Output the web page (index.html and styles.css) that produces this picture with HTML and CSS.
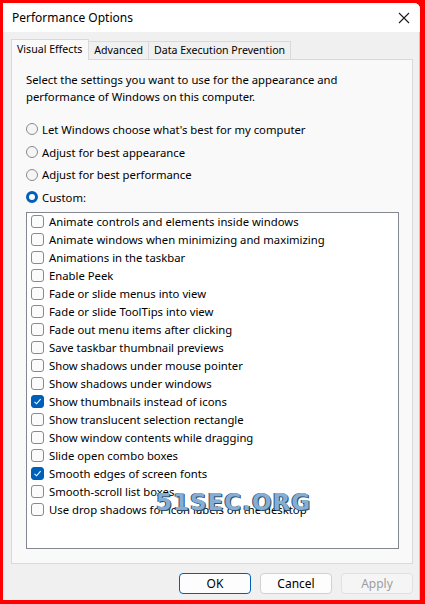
FILE: index.html
```html
<!DOCTYPE html>
<html lang="en">
<head>
    <meta charset="UTF-8">
    <title>Performance Options</title>
    <link rel="stylesheet" href="styles.css">
</head>
<body>

<div class="window">
    <div class="titlebar">
        <span class="title">Performance Options</span>
        <svg class="close" width="12" height="12" viewBox="0 0 12 12">
            <path d="M1 1 L11 11 M11 1 L1 11" stroke="#1a1a1a" stroke-width="1.1" fill="none"/>
        </svg>
    </div>

    <div class="content">
        <div class="tabs">
            <div class="tab active">Visual Effects</div>
            <div class="tab">Advanced</div>
            <div class="tab">Data Execution Prevention</div>
        </div>

        <div class="panel">
            <p class="intro">Select the settings you want to use for the appearance and performance of Windows on this computer.</p>

            <div class="radios">
                <label class="radio"><span class="dot"></span>Let Windows choose what's best for my computer</label>
                <label class="radio"><span class="dot"></span>Adjust for best appearance</label>
                <label class="radio"><span class="dot"></span>Adjust for best performance</label>
                <label class="radio"><span class="dot on"></span>Custom:</label>
            </div>

            <div class="listbox" id="effects">
                <!-- rows are filled in by the script below -->
            </div>
        </div>

        <div class="buttons">
            <button class="btn default">OK</button>
            <button class="btn">Cancel</button>
            <button class="btn" disabled>Apply</button>
        </div>
    </div>

    <div class="watermark">51SEC.ORG</div>
</div>

<script>
    // Visual effect options, as listed in the dialog
    const effects = [
        { name: 'Animate controls and elements inside windows', checked: false },
        { name: 'Animate windows when minimizing and maximizing', checked: false },
        { name: 'Animations in the taskbar', checked: false },
        { name: 'Enable Peek', checked: false },
        { name: 'Fade or slide menus into view', checked: false },
        { name: 'Fade or slide ToolTips into view', checked: false },
        { name: 'Fade out menu items after clicking', checked: false },
        { name: 'Save taskbar thumbnail previews', checked: false },
        { name: 'Show shadows under mouse pointer', checked: false },
        { name: 'Show shadows under windows', checked: false },
        { name: 'Show thumbnails instead of icons', checked: true },
        { name: 'Show translucent selection rectangle', checked: false },
        { name: 'Show window contents while dragging', checked: false },
        { name: 'Slide open combo boxes', checked: false },
        { name: 'Smooth edges of screen fonts', checked: true },
        { name: 'Smooth-scroll list boxes', checked: false },
        { name: 'Use drop shadows for icon labels on the desktop', checked: false }
    ];

    const tick = '<svg width="9" height="9" viewBox="0 0 9 9"><path d="M1.5 4.8 L3.6 6.8 L7.6 2.2" stroke="#fff" stroke-width="1.1" fill="none"/></svg>';

    const list = document.getElementById('effects');
    effects.forEach(item => {
        list.innerHTML += `<div class="row">
                <span class="box ${item.checked ? 'checked' : ''}">${item.checked ? tick : ''}</span>
                <span>${item.name}</span>
            </div>`;
    });
</script>

</body>
</html>
```

FILE: styles.css
```css
html, body {
    margin: 0;
    padding: 0;
}

body {
    background-color: #ff0000;
    font-family: "Noto Sans", "Open Sans", sans-serif;
    font-size: 11.3px;
    color: #000;
    padding: 3px 5px 4px 3px;
    height: 597px;
}

.window {
    position: relative;
    width: 417px;
    height: 597px;
    background-color: #f0f0f0;
    display: flex;
    flex-direction: column;
    border-top-right-radius: 6px;
    box-shadow: inset -1px 0 0 #c8c8c8;
}

.titlebar {
    height: 29px;
    background-color: #fff;
    display: flex;
    align-items: center;
    justify-content: space-between;
    padding: 0 10px 0 9px;
    border-top-right-radius: 6px;
    font-size: 12px;
}

.close {
    margin-top: 1px;
}

.content {
    flex: 1;
    display: flex;
    flex-direction: column;
    padding: 7px 7px 0 8px;
}

.tabs {
    display: flex;
    align-items: flex-end;
    height: 20px;
    position: relative;
    z-index: 1;
    font-size: 10.6px;
}

.tab {
    height: 18px;
    line-height: 17px;
    padding: 0 5px;
    border: 1px solid #d9d9d9;
    border-bottom: none;
    background-color: #f0f0f0;
    box-sizing: border-box;
    margin-left: -1px;
}

.tab:first-child {
    margin-left: 0;
}

.tab.active {
    height: 21px;
    line-height: 18px;
    padding: 0 6px 0 5px;
    background-color: #f9f9f9;
    margin-bottom: -1px;
}

.panel {
    height: 505px;
    box-sizing: border-box;
    background-color: #f9f9f9;
    border: 1px solid #d9d9d9;
    padding: 12px 13px 0 14px;
}

.intro {
    margin: 0;
    line-height: 16.5px;
}

.radios {
    margin-top: 13px;
    display: flex;
    flex-direction: column;
}

.radio {
    height: 22.7px;
    display: flex;
    align-items: center;
    gap: 4px;
}

.dot {
    width: 12px;
    height: 12px;
    border: 1px solid #8a8a8a;
    border-radius: 50%;
    box-sizing: border-box;
    background-color: #f5f5f5;
}

.dot.on {
    border: 3px solid #005fb8;
    background-color: #fff;
}

.listbox {
    margin-top: 3px;
    height: 337px;
    box-sizing: border-box;
    background-color: #fff;
    border: 1px solid #828790;
    padding-left: 4px;
}

.row {
    height: 18px;
    display: flex;
    align-items: center;
    gap: 5px;
    white-space: nowrap;
}

.box {
    width: 13px;
    height: 13px;
    box-sizing: border-box;
    border: 1px solid #8a8a8a;
    border-radius: 3px;
    background-color: #fbfbfb;
    display: flex;
    align-items: center;
    justify-content: center;
}

.box.checked {
    border-color: #005fb8;
    background-color: #005fb8;
}

.buttons {
    display: flex;
    justify-content: flex-end;
    gap: 9px;
    margin-top: 9px;
}

.btn {
    width: 72px;
    height: 21px;
    font-family: inherit;
    font-size: 12px;
    color: #000;
    background-color: #fdfdfd;
    border: 1px solid #d0d0d0;
    border-radius: 4px;
    padding: 0;
}

.btn.default {
    border-color: #005fb8;
}

.btn:disabled {
    color: #9d9d9d;
    background-color: #f5f5f5;
    border-color: #e0e0e0;
}

.watermark {
    position: absolute;
    left: 153px;
    top: 486px;
    font-family: "DejaVu Sans", sans-serif;
    font-weight: bold;
    font-size: 23px;
    letter-spacing: 1px;
    color: #86aed3;
    text-shadow: 1px 1px 0 #2f4f6f, -1px 0 0 #2f4f6f;
}
```
